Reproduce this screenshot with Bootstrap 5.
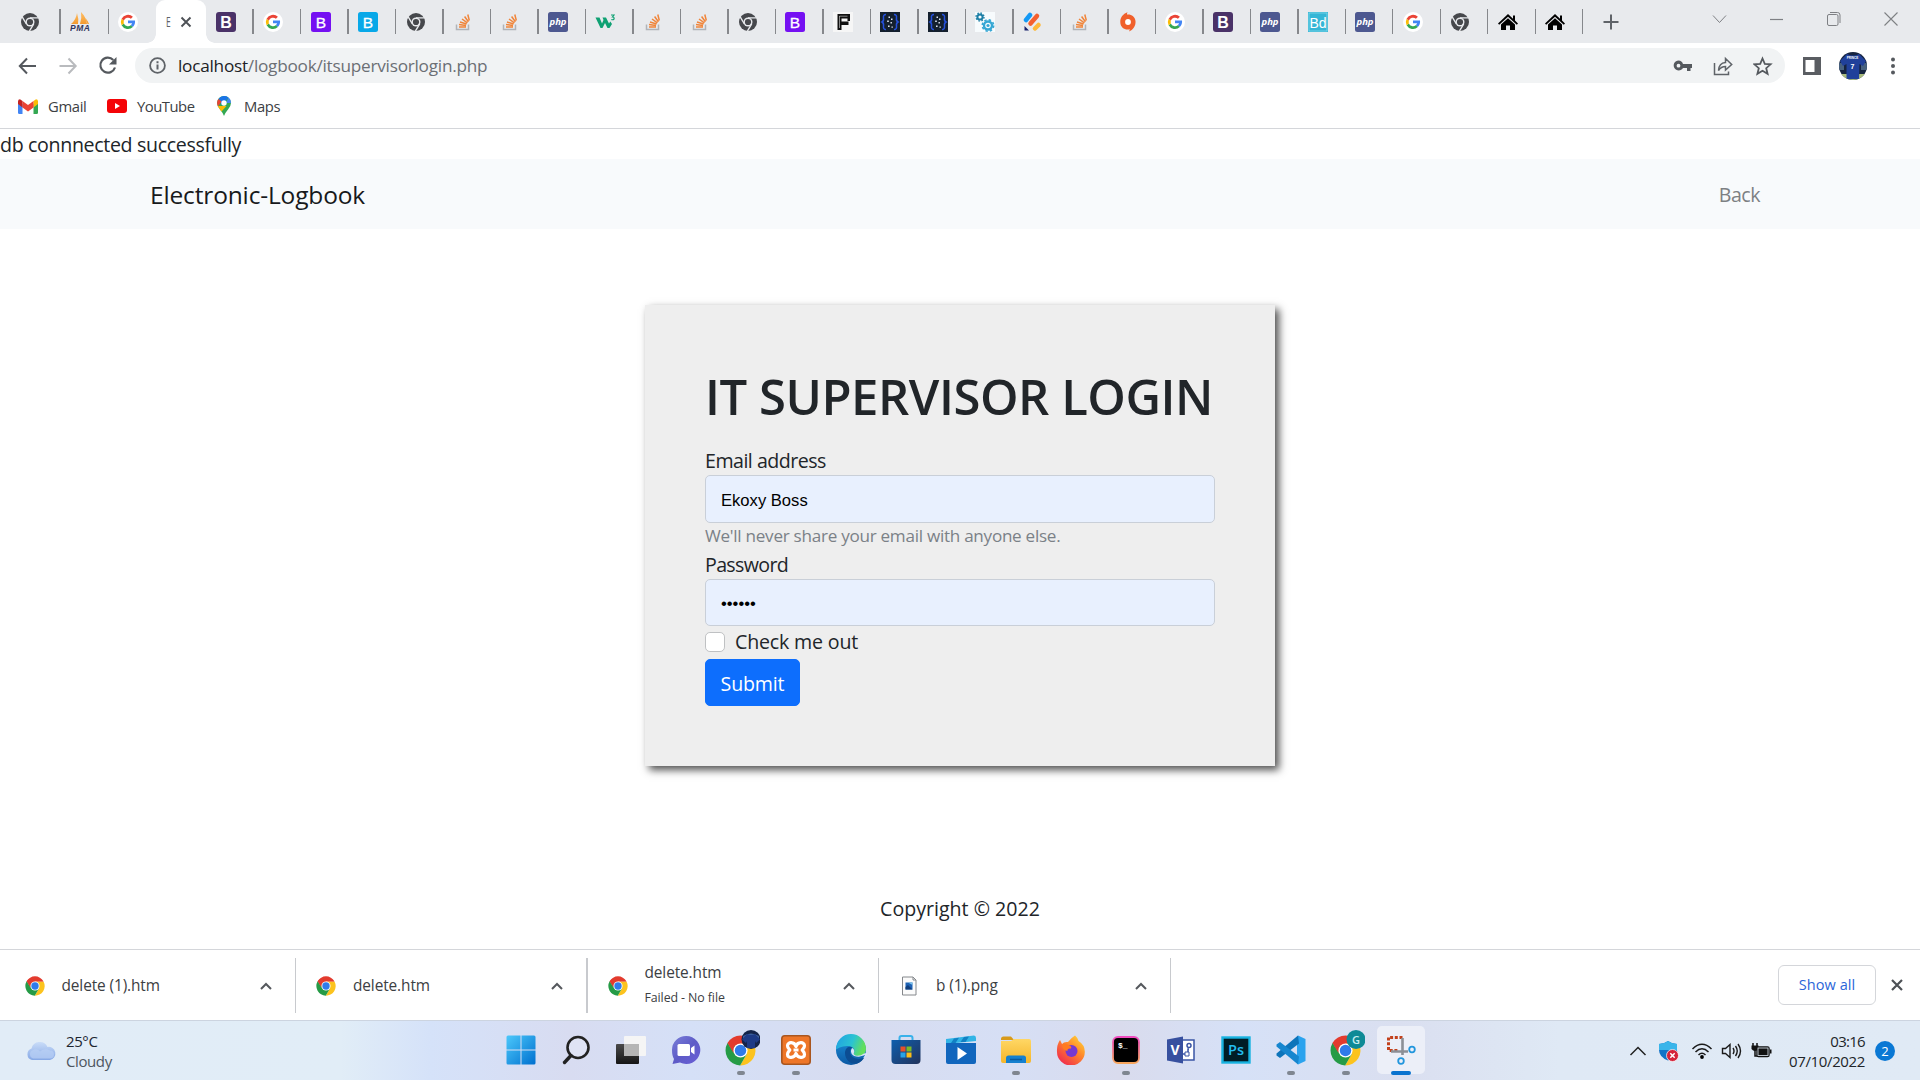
<!DOCTYPE html>
<html lang="en">
<head>
<meta charset="utf-8">
<meta name="viewport" content="width=device-width, initial-scale=1">
<title>Electronic-Logbook</title>
<link href="https://cdn.jsdelivr.net/npm/bootstrap@5.3.0/dist/css/bootstrap.min.css" rel="stylesheet">
<style>
html{font-size:20px}
body{font-family:"Open Sans","Noto Sans",sans-serif;font-size:19.6px;width:1920px;height:1080px;overflow:hidden;color:#212529;background:#fff}
svg{display:block;flex:none}
/* tab strip */
.tabstrip{height:43px;background:#e8eaed}
.tabitem{width:47.49px;padding-left:9.2px}
.tabitem::after{content:"";width:1.4px;height:25px;background:#86888c}
.tabitem.nosep::after{background:transparent}
.tab-first{width:60.5px;padding-left:20px}
.tab-second{width:48.4px}
.tab-active{width:50px;height:43px;background:#fff;border-radius:9px 9px 0 0;position:relative;padding-left:10px;gap:8px}
.tab-active::before,.tab-active::after{content:"";position:absolute;bottom:0;width:9px;height:9px}
.tab-active::before{left:-9px;background:radial-gradient(circle at 0 0,transparent 8.5px,#fff 9px)}
.tab-active::after{right:-9px;background:radial-gradient(circle at 100% 0,transparent 8.5px,#fff 9px)}
.tab-letter{width:6px;font-size:14px;color:#5f6368;line-height:20px;transform:scaleX(.6);transform-origin:0 50%}
.newtab{margin-left:20px}
.winctl{gap:36px;padding-right:18px;padding-bottom:6px}
/* toolbar */
.toolbar{height:46px;padding:0 17px 1px}
.omni{height:35px;width:1650px;background:#f1f3f4;border-radius:18px;margin-left:17px;padding:0 12px 0 14px}
.url{font-size:17.2px;letter-spacing:-.24px;line-height:24px;color:#6b6f74;margin-left:12px}
.url b{font-weight:400;color:#202124}
.bookmarks{height:40px;border-bottom:1px solid #d4d6da;padding:0 0 5px 18px;font-size:14.8px;letter-spacing:-.35px;color:#3c4043}
.bm-gmail{margin-left:10px;width:59px}
.bm-yt{margin-left:10px;width:80px;letter-spacing:-.48px}
.bm-maps{margin-left:13px}
.g15{margin-left:15px}.g17{margin-left:17px}.g18{margin-left:18px}.g19{margin-left:19px}.g20{margin-left:20px}.g22{margin-left:22px}
/* page */
.pagearea{height:820px}
.tx{display:inline-block;transform:translateY(1px)}
.dbmsg{line-height:30px;height:30px;letter-spacing:-.34px}
.topnav{height:70px;background:#f8fafc}
.topnav .container{max-width:1650px}
.topnav .navbar-brand{color:#17191b;font-size:24.5px;letter-spacing:-.15px}
.topnav .backlink{color:#7d8083;font-size:19.6px;letter-spacing:-.5px}
.loginbox{width:630px;background:#eee;padding:60px;box-shadow:4px 4px 8px #505050;margin-top:76px;line-height:30px}
.loginbox h1{font-size:49px;line-height:60px;font-weight:600;white-space:nowrap;margin-bottom:20px;letter-spacing:-.45px}
.loginbox .form-control{background:#e8f0fe;border-color:#c9cfd8;border-radius:5px;height:47.6px;font:16.6px "Liberation Sans",sans-serif;color:#000;padding-top:11px}
.lb-email{letter-spacing:-.5px}
.lb-pass{letter-spacing:-.65px}
.lb-check{letter-spacing:-.17px}
.hint{font-size:17.1px;line-height:26px;color:#7b8187;letter-spacing:-.27px}
.loginbox .form-check{margin-bottom:2.5px;padding-left:30px}
.loginbox .form-check-input{margin-left:-30px;margin-top:5.5px;width:20px;height:20px;border-color:#bfc1c3}
.loginbox .btn-primary{border-radius:5px;height:47.6px;width:95px;padding-left:0;padding-right:0;font-size:19.6px;letter-spacing:-.15px}
.copy{margin-top:127px}
/* downloads */
.dlbar{height:71px;border-top:1px solid #d4d6da;background:#fff;font-size:15.4px;letter-spacing:-.1px;color:#3c4043}
.dlitem{width:291.5px;height:55px;border-right:1px solid #c8cace;padding-left:20px;padding-right:22px;margin-top:8px}
.dl-first{width:296px;padding-left:24.5px}
.dl-thick{border-right-width:2px}
.dlitem .dltext{margin-left:17px;line-height:24px}
.dlitem .dlsub{font-size:12.4px;line-height:25px}
.dlend{height:69px;padding-right:17px}
.showall{width:98px;height:40px;border:1px solid #d4d6da;border-radius:6px;color:#2b66d9;font-size:14.5px;font-weight:500;letter-spacing:.1px}
/* taskbar */
.taskbar{height:60px;background:linear-gradient(90deg,#e1ecf7 0,#e1edf7 340px,#d5e2f9 430px,#d8dcf1 570px,#d5e0f7 690px,#d7dcf0 860px,#d6dff5 1010px,#d9dbed 1120px,#d6e1f7 1240px,#dadff0 1400px,#dfe9f5 1560px,#e0eaf5);border-top:1px solid #ccd4e0;font-size:15px;line-height:20px}
.weather{width:493px;padding-left:25px;color:#1c2530;letter-spacing:-.4px}
.wtext{margin-left:9px}
.wtext div+div{color:#4d5660}
.appslot{width:55px;height:59px;padding-top:5px;position:relative}
.appslot .tile{width:48px;height:48px;display:flex;align-items:center;justify-content:center}
.appslot.running::after{content:"";position:absolute;left:23.5px;bottom:5px;width:8px;height:4px;border-radius:2px;background:#7f8690}
.appslot.current::after{left:17.5px;width:20px;background:#0a73cf}
.appslot.current .tile{background:#eceff8;border-radius:5px}
.tray{padding-right:25px}
.clock{width:76px;margin-left:17.5px;letter-spacing:-.36px;white-space:nowrap}
.clock .hm{letter-spacing:-.7px}
.notif{width:20px;height:20px;border-radius:50%;background:#0a78d4;color:#fff;font-size:13px;margin-left:10px}
.s8{margin-left:8px}.s11{margin-left:11px}.s7{margin-left:7px}
</style>
<script src="https://cdn.jsdelivr.net/npm/bootstrap@5.3.0/dist/js/bootstrap.bundle.min.js"></script>
</head>
<body class="d-flex flex-column">

<svg width="0" height="0" class="position-absolute">
<defs>
<linearGradient id="gwin" x1="0" y1="0" x2="1" y2="1"><stop offset="0" stop-color="#4cc8fb"/><stop offset="1" stop-color="#0070cf"/></linearGradient>
<linearGradient id="gchat" x1="0" y1="0" x2="1" y2="1"><stop offset="0" stop-color="#7a7fd8"/><stop offset=".5" stop-color="#5e5bc7"/><stop offset="1" stop-color="#6a5fd6"/></linearGradient>
<linearGradient id="gedge" x1="0" y1="0" x2="1" y2=".3"><stop offset="0" stop-color="#1fa0e4"/><stop offset=".6" stop-color="#2bc3d2"/><stop offset="1" stop-color="#63df5c"/></linearGradient>
<linearGradient id="gedge2" x1="0" y1="0" x2="0" y2="1"><stop offset="0" stop-color="#1c93dd"/><stop offset="1" stop-color="#0c59a4"/></linearGradient>
<linearGradient id="gstore" x1="0" y1="0" x2="1" y2="1"><stop offset="0" stop-color="#0f5fae"/><stop offset="1" stop-color="#22335c"/></linearGradient>
<linearGradient id="gfold" x1="0" y1="0" x2="0" y2="1"><stop offset="0" stop-color="#ffd765"/><stop offset="1" stop-color="#f5b62b"/></linearGradient>
<linearGradient id="gfox" x1="1" y1="0" x2=".2" y2="1"><stop offset="0" stop-color="#ffe53b"/><stop offset=".45" stop-color="#ff8a2a"/><stop offset="1" stop-color="#f0274f"/></linearGradient>
<linearGradient id="gterm" x1="0" y1="0" x2="0" y2="1"><stop offset="0" stop-color="#f04bc0"/><stop offset="1" stop-color="#f6a55c"/></linearGradient>
<linearGradient id="gcloud" x1="0" y1="0" x2="0" y2="1"><stop offset="0" stop-color="#c9dcf8"/><stop offset="1" stop-color="#86a8e6"/></linearGradient>
<linearGradient id="gpma" x1="0" y1="0" x2="0" y2="1"><stop offset="0" stop-color="#ffc069"/><stop offset="1" stop-color="#f39a2d"/></linearGradient>
<linearGradient id="gblk" x1="0" y1="0" x2="0" y2="1"><stop offset="0" stop-color="#4a4a4a"/><stop offset="1" stop-color="#151515"/></linearGradient>

<symbol id="chromegrey" viewBox="0 0 20 20"><circle cx="10" cy="10" r="9" fill="#46484c"/><circle cx="10" cy="10" r="4.500" fill="#e8eaed"/><circle cx="10" cy="10" r="3.100" fill="#46484c"/><path d="M10 5.900H18.600M6.400 12L2.200 4.900M13.700 11.900L9.400 19.200" stroke="#e8eaed" stroke-width="1.400" fill="none"/></symbol>
<symbol id="chromecol" viewBox="0 0 32 32"><path d="M16 16L2.600 8.300A15.500 15.500 0 0 1 29.400 8.300L29.400 9H16z" fill="#e33b2e"/><path d="M16 9H29.800A15.500 15.500 0 0 1 15.600 31.500L22.500 19.500z" fill="#fcc31e"/><path d="M2.600 8.300A15.500 15.500 0 0 0 15.600 31.500L22.300 19.800 9.800 19.500z" fill="#259b46"/><path d="M2.600 8.300L9.300 19.700 14 20 10 10z" fill="#259b46"/><path d="M2.600 8.300L8.800 18.500 10 11 16 9 8 4z" fill="#e33b2e"/><circle cx="16" cy="16" r="7.300" fill="#fff"/><circle cx="16" cy="16" r="5.900" fill="#2f7bea"/></symbol>
<symbol id="google" viewBox="0 0 20 20"><circle cx="10" cy="10" r="10" fill="#fff"/><path d="M10 8.600H17Q17.500 12.500 14.900 15L12.700 13.300Q13.800 12.500 14.100 11.300H10z" fill="#4285f4"/><path d="M14.900 15A7.200 7.200 0 0 1 3.600 13.200L5.900 11.400A4.400 4.400 0 0 0 12.700 13.300z" fill="#34a853"/><path d="M3.600 13.200A7.200 7.200 0 0 1 3.600 6.800L5.900 8.600A4.400 4.400 0 0 0 5.900 11.400z" fill="#fbbc05"/><path d="M3.600 6.800A7.200 7.200 0 0 1 14.900 4.700L12.900 6.700A4.400 4.400 0 0 0 5.900 8.600z" fill="#ea4335"/></symbol>
<symbol id="pma" viewBox="0 0 20 20"><path d="M7 1Q9 7 8 12H1Q6 8 7 1zM11 0Q16 5 17 12H10Q12 6 11 0zM15.500 6Q18 9 19 12H17.500z" fill="url(#gpma)"/><text x="0" y="19" font-family="Liberation Sans" font-weight="700" font-style="italic" font-size="8.500" fill="#33375c" textLength="20">PMA</text></symbol>
<symbol id="bdark" viewBox="0 0 20 20"><rect width="20" height="20" rx="3" fill="#4a3268"/><text x="10" y="15.500" text-anchor="middle" font-family="Liberation Sans" font-weight="700" font-size="16" fill="#fff">B</text></symbol>
<symbol id="bpurple" viewBox="0 0 20 20"><rect width="20" height="20" rx="2.500" fill="#7510f2"/><text x="10" y="15.500" text-anchor="middle" font-family="Liberation Sans" font-size="15.500" fill="#fff" stroke="#fff" stroke-width=".3">B</text></symbol>
<symbol id="bcyan" viewBox="0 0 20 20"><rect width="20" height="20" rx="2.500" fill="#08a8e8"/><text x="10" y="15.500" text-anchor="middle" font-family="Liberation Sans" font-size="15.500" fill="#fff" stroke="#fff" stroke-width=".3">B</text></symbol>
<symbol id="stack" viewBox="0 0 20 20"><path d="M3.500 12.500V17.500H15.500V12.500" fill="none" stroke="#b0b3b8" stroke-width="1.500"/><path d="M6 15H13M6 12.600L13 13.500M7 10L13.600 12M9 7L14.400 10.800M11.600 4.500L15.400 9.700M14.800 2.500L16.300 8.500" stroke="#f0853a" stroke-width="1.500"/></symbol>
<symbol id="phpi" viewBox="0 0 20 20"><rect width="20" height="20" rx="2.500" fill="#4d5890"/><text x="1.500" y="12.800" font-family="Open Sans" font-weight="700" font-style="italic" font-size="9.500" fill="#fff" textLength="17">php</text></symbol>
<symbol id="w3" viewBox="0 0 20 20"><path d="M.500 5.500H4.500L7 11.500 8.500 8 7.500 5.500H11L14 11.500 15.300 9.500 17 12 14.500 16H12.500L10 11 7.500 16H5.500z" fill="#0fa173"/><path d="M16 3H19L17.500 5Q19.500 5 19 7Q18 8.200 16.300 7.500" fill="none" stroke="#0fa173" stroke-width="1.200"/></symbol>
<symbol id="fmark" viewBox="0 0 20 20"><rect width="20" height="20" fill="#f6f6f6"/><path d="M4.500 2H17V9H14.500V6.500H8.500V9.500H15.500V13H8.500V18H4.500z" fill="#111"/><path d="M6.500 4.200H14.500M6.500 4V16" stroke="#fff" stroke-width=".5"/></symbol>
<symbol id="braces" viewBox="0 0 20 20"><rect width="20" height="20" fill="#14202e"/><path d="M6 2.500Q3 2.500 3.500 6Q4 9 2 10Q4 11 3.500 14Q3 17.500 6 17.500M14 2.500Q17 2.500 16.500 6Q16 9 18 10Q16 11 16.500 14Q17 17.500 14 17.500" fill="none" stroke="#2450dc" stroke-width="1.500"/><path d="M8.500 4.500h1.500v1.500H8.500zM11 6.500h1.500v1.500h-1.500zM7.200 8.500h1.600v1.600H7.200zM10.500 10h1.400v1.400h-1.400zM8 13.500h1.600v1.600H8zM11.500 14.500h1.300v1.300h-1.300z" fill="#dfe6f5"/></symbol>
<symbol id="gears" viewBox="0 0 20 20"><rect width="20" height="20" fill="#f7fbfd"/><circle cx="5" cy="5" r="2.600" fill="none" stroke="#1d7fa6" stroke-width="2"/><circle cx="5" cy="5" r="4" fill="none" stroke="#1d7fa6" stroke-width="1.400" stroke-dasharray="1.500 1.640"/><circle cx="13" cy="13.500" r="4" fill="none" stroke="#36a7d4" stroke-width="2.400"/><circle cx="13" cy="13.500" r="5.700" fill="none" stroke="#36a7d4" stroke-width="1.600" stroke-dasharray="2.400 2.080"/><circle cx="13" cy="13.500" r="1.600" fill="#36a7d4"/></symbol>
<symbol id="diag" viewBox="0 0 20 20"><g stroke-linecap="round" stroke-width="4.500"><path d="M3 8L7 3" stroke="#1499f5"/><path d="M7.500 11.500L14 4" stroke="#f4602f"/><path d="M12 16.500L15.500 13" stroke="#fdb93a"/></g><path d="M1.500 14L6 18.500H1.500z" fill="#17206b"/></symbol>
<symbol id="origin" viewBox="0 0 20 20"><path d="M10 2.500C14 2.500 17 5 17.500 9C18 14 15 18 11 19.500C11.500 18.500 11.800 18 11.800 17.300C7 18.500 2.500 15.500 2.300 10.500C2 5.500 5 2 9.500 .300C9 1.200 9 1.800 9 2.500z" fill="#f0602b"/><circle cx="10" cy="10" r="2.900" fill="#fff"/></symbol>
<symbol id="bdi" viewBox="0 0 20 20"><rect width="20" height="20" fill="#35b6d6"/><rect x="1" y="1" width="18" height="18" fill="none" stroke="#8fdcec" stroke-width=".7"/><text x="1.500" y="15.500" font-family="Liberation Sans" font-size="14" fill="#fff" textLength="17">Bd</text></symbol>
<symbol id="house" viewBox="0 0 20 20"><path d="M10 2L15 6.800V3.500H17V8.600L20 11.500 18.800 12.700 10 4.800 1.200 12.700 0 11.500z" fill="#000"/><path d="M10 6.300L17 12.500V18H12V13.500H8V18H3V12.500z" fill="#000"/></symbol>
<symbol id="chevup" viewBox="0 0 14 14"><path d="M2 10L7 5 12 10" fill="none" stroke="#55585d" stroke-width="2"/></symbol>
</defs>
</svg>

<!-- tabs -->
<header class="tabstrip d-flex align-items-center">
 <div class="tabitem tab-first d-flex align-items-center justify-content-between"><svg width="20" height="20"><use href="#chromegrey"/></svg></div>
 <div class="tabitem tab-second d-flex align-items-center justify-content-between"><svg width="20" height="20"><use href="#pma"/></svg></div>
 <div class="tabitem nosep d-flex align-items-center justify-content-between"><svg width="20" height="20"><use href="#google"/></svg></div>
 <div class="tab-active d-flex align-items-center"><span class="tab-letter">E</span><svg width="12" height="12" viewBox="0 0 12 12"><path d="M1.500 1.500L10.500 10.500M10.500 1.500L1.500 10.500" stroke="#4d5156" stroke-width="1.900"/></svg></div>
 <div class="tabitem d-flex align-items-center justify-content-between"><svg width="20" height="20"><use href="#bdark"/></svg></div>
 <div class="tabitem d-flex align-items-center justify-content-between"><svg width="20" height="20"><use href="#google"/></svg></div>
 <div class="tabitem d-flex align-items-center justify-content-between"><svg width="20" height="20"><use href="#bpurple"/></svg></div>
 <div class="tabitem d-flex align-items-center justify-content-between"><svg width="20" height="20"><use href="#bcyan"/></svg></div>
 <div class="tabitem d-flex align-items-center justify-content-between"><svg width="20" height="20"><use href="#chromegrey"/></svg></div>
 <div class="tabitem d-flex align-items-center justify-content-between"><svg width="20" height="20"><use href="#stack"/></svg></div>
 <div class="tabitem d-flex align-items-center justify-content-between"><svg width="20" height="20"><use href="#stack"/></svg></div>
 <div class="tabitem d-flex align-items-center justify-content-between"><svg width="20" height="20"><use href="#phpi"/></svg></div>
 <div class="tabitem d-flex align-items-center justify-content-between"><svg width="20" height="20"><use href="#w3"/></svg></div>
 <div class="tabitem d-flex align-items-center justify-content-between"><svg width="20" height="20"><use href="#stack"/></svg></div>
 <div class="tabitem d-flex align-items-center justify-content-between"><svg width="20" height="20"><use href="#stack"/></svg></div>
 <div class="tabitem d-flex align-items-center justify-content-between"><svg width="20" height="20"><use href="#chromegrey"/></svg></div>
 <div class="tabitem d-flex align-items-center justify-content-between"><svg width="20" height="20"><use href="#bpurple"/></svg></div>
 <div class="tabitem d-flex align-items-center justify-content-between"><svg width="20" height="20"><use href="#fmark"/></svg></div>
 <div class="tabitem d-flex align-items-center justify-content-between"><svg width="20" height="20"><use href="#braces"/></svg></div>
 <div class="tabitem d-flex align-items-center justify-content-between"><svg width="20" height="20"><use href="#braces"/></svg></div>
 <div class="tabitem d-flex align-items-center justify-content-between"><svg width="20" height="20"><use href="#gears"/></svg></div>
 <div class="tabitem d-flex align-items-center justify-content-between"><svg width="20" height="20"><use href="#diag"/></svg></div>
 <div class="tabitem d-flex align-items-center justify-content-between"><svg width="20" height="20"><use href="#stack"/></svg></div>
 <div class="tabitem d-flex align-items-center justify-content-between"><svg width="20" height="20"><use href="#origin"/></svg></div>
 <div class="tabitem d-flex align-items-center justify-content-between"><svg width="20" height="20"><use href="#google"/></svg></div>
 <div class="tabitem d-flex align-items-center justify-content-between"><svg width="20" height="20"><use href="#bdark"/></svg></div>
 <div class="tabitem d-flex align-items-center justify-content-between"><svg width="20" height="20"><use href="#phpi"/></svg></div>
 <div class="tabitem d-flex align-items-center justify-content-between"><svg width="20" height="20"><use href="#bdi"/></svg></div>
 <div class="tabitem d-flex align-items-center justify-content-between"><svg width="20" height="20"><use href="#phpi"/></svg></div>
 <div class="tabitem d-flex align-items-center justify-content-between"><svg width="20" height="20"><use href="#google"/></svg></div>
 <div class="tabitem d-flex align-items-center justify-content-between"><svg width="20" height="20"><use href="#chromegrey"/></svg></div>
 <div class="tabitem d-flex align-items-center justify-content-between"><svg width="20" height="20"><use href="#house"/></svg></div>
 <div class="tabitem d-flex align-items-center justify-content-between"><svg width="20" height="20"><use href="#house"/></svg></div>
 <svg class="newtab" width="16" height="16" viewBox="0 0 16 16"><path d="M8 .500V15.500M.500 8H15.500" stroke="#5f6368" stroke-width="2"/></svg>
 <div class="winctl d-flex align-items-center ms-auto">
  <svg width="22" height="22" viewBox="0 0 22 22"><path d="M3 7.500L9.500 14.500 16 7.500" fill="none" stroke="#7e8084"/></svg>
  <svg width="20" height="20" viewBox="0 0 20 20"><path d="M2 10.500H15" stroke="#7e8084" stroke-width="1.200"/></svg>
  <svg width="20" height="20" viewBox="0 0 20 20"><rect x="3.500" y="5.500" width="10.500" height="11" rx="1.500" fill="none" stroke="#7e8084"/><path d="M6 3.500H13.500Q16 3.500 16 6V14" fill="none" stroke="#7e8084"/></svg>
  <svg width="22" height="22" viewBox="0 0 22 22"><path d="M4.500 4.500L17.500 17.500M17.500 4.500L4.500 17.500" stroke="#7e8084" stroke-width="1.100"/></svg>
 </div>
</header>

<!-- toolbar -->
<div class="toolbar d-flex align-items-center">
 <svg width="21" height="20" viewBox="0 0 21 20"><path d="M19 10H3M10 2.500L2.800 10 10 17.500" fill="none" stroke="#55595e" stroke-width="2"/></svg>
 <svg class="g20" width="21" height="20" viewBox="0 0 21 20"><path d="M1.500 10H17.500M10.500 2.500L17.700 10 10.500 17.500" fill="none" stroke="#b9bbbe" stroke-width="2"/></svg>
 <svg class="g18" width="21" height="21" viewBox="0 0 21 21"><path d="M16.300 5A7.500 7.500 0 1 0 18 12.500" fill="none" stroke="#55595e" stroke-width="2.200"/><path d="M19.500 2V9.500H12z" fill="#55595e"/></svg>
 <div class="omni d-flex align-items-center">
  <svg width="17" height="17" viewBox="0 0 17 17"><circle cx="8.500" cy="8.500" r="7.400" fill="none" stroke="#5f6368" stroke-width="1.800"/><path d="M8.500 7.500V12.500M8.500 4.300V6.200" stroke="#5f6368" stroke-width="2"/></svg>
  <span class="url"><b>localhost</b>/logbook/itsupervisorlogin.php</span>
  <svg class="ms-auto" width="20" height="20" viewBox="0 0 20 20"><path fill-rule="evenodd" d="M5.500 4.500A5 5 0 0 1 10 8H19V12H17.500V15H14V12H10A5 5 0 1 1 5.500 4.500zM5.500 7.800A1.900 1.900 0 1 0 5.500 11.600 1.900 1.900 0 0 0 5.500 7.800z" fill="#55595e"/></svg>
  <svg class="g20" width="20" height="20" viewBox="0 0 20 20"><path d="M1.500 7V18.500H15.500V15.500" fill="none" stroke="#5f6368" stroke-width="1.500"/><path d="M5.500 14.500Q6 7 12.500 6.500V2.500L18.700 8.500 12.500 14V10.500Q8 10.500 5.500 14.500z" fill="none" stroke="#5f6368" stroke-width="1.500"/></svg>
  <svg class="g20" width="20" height="20" viewBox="0 0 20 20"><path d="M9.500 2.500L11.800 7.800 17.600 8.300 13.200 12.200 14.600 17.800 9.500 14.800 4.400 17.800 5.800 12.200 1.400 8.300 7.200 7.800z" fill="none" stroke="#55595e" stroke-width="1.800"/></svg>
 </div>
 <svg class="g18" width="18" height="18" viewBox="0 0 18 18"><path fill-rule="evenodd" d="M0 0H18V18H0zM2.500 3V15H11.500V3z" fill="#5a5d62"/></svg>
 <svg class="g18" width="28" height="28" viewBox="0 0 28 28"><defs><clipPath id="av"><circle cx="14" cy="14" r="14"/></clipPath></defs><g clip-path="url(#av)"><rect width="28" height="28" fill="#15233f"/><path d="M0 11H5V18H0zM22 11H28V18H22z" fill="#47617f"/><path d="M0 22H28V28H0z" fill="#a9bb7c"/><path d="M8 2Q14 5 20 2L27 9 24 14 20.500 12 20 27H7.500L7.500 12 4 14 1 9z" fill="#20409a"/><text x="13.500" y="7" text-anchor="middle" font-size="3" font-weight="700" font-family="Liberation Sans" fill="#fff">PRINCE</text><text x="13.500" y="17" text-anchor="middle" font-size="7" font-weight="700" font-family="Liberation Sans" fill="#fff">7</text></g></svg>
 <svg class="g22" width="8" height="18" viewBox="0 0 8 18"><g fill="#55595e"><circle cx="4" cy="2.500" r="2"/><circle cx="4" cy="9" r="2"/><circle cx="4" cy="15.500" r="2"/></g></svg>
</div>

<div class="bookmarks d-flex align-items-center">
 <svg width="20" height="15" viewBox="0 0 20 15"><path d="M0 2L4.500 5V15H1.300Q0 15 0 13.500z" fill="#4285f4"/><path d="M20 2L15.500 5V15H18.700Q20 15 20 13.500z" fill="#34a853"/><path d="M15.500 2L18 .200Q20 .200 20 2.500V5L15.500 8.500z" fill="#fbbc04"/><path d="M4.500 2L10 6 15.500 2V8.500L10 12.500 4.500 8.500z" fill="#ea4335"/><path d="M0 2.500Q0 .200 2 .200L4.500 2V8.500L0 5z" fill="#c5221f"/></svg>
 <span class="bm-gmail">Gmail</span>
 <svg width="20" height="14" viewBox="0 0 20 14"><rect width="20" height="14" rx="3" fill="#f40407"/><path d="M8 4L13 7 8 10z" fill="#fff"/></svg>
 <span class="bm-yt">YouTube</span>
 <svg width="14" height="20" viewBox="0 0 14 20"><path d="M7 0A7 7 0 0 1 14 7Q14 10 11 13.500 8 17 7 20 6 17 3 13.500 0 10 0 7A7 7 0 0 1 7 0z" fill="#34a853"/><path d="M1.500 3A7 7 0 0 1 11.500 1.500L5 9.500z" fill="#1a73e8"/><path d="M1.500 3L4.500 5.500 1 10.500Q-1 6 1.500 3z" fill="#ea4335"/><path d="M.800 10L9.500 10 4.500 15.500Q1.500 12 .800 10z" fill="#fbbc04"/><path d="M11.500 1.500Q14 3.500 14 7L9 7z" fill="#4285f4"/><circle cx="7" cy="7" r="2.700" fill="#fff"/></svg>
 <span class="bm-maps">Maps</span>
</div>

<!-- web page -->
<main class="pagearea overflow-hidden">
 <div class="dbmsg"><span class="tx">db connnected successfully</span></div>
 <nav class="navbar navbar-expand-lg topnav">
  <div class="container">
   <a class="navbar-brand" href="#"><span class="tx">Electronic-Logbook</span></a>
   <div class="navbar-nav"><a class="nav-link backlink" href="#"><span class="tx">Back</span></a></div>
  </div>
 </nav>
 <div class="d-flex flex-column align-items-center">
  <form class="loginbox">
   <h1><span class="tx">IT SUPERVISOR LOGIN</span></h1>
   <div class="lb-email"><span class="tx">Email address</span></div>
   <input type="text" class="form-control" value="Ekoxy Boss">
   <div class="hint">We'll never share your email with anyone else.</div>
   <div class="lb-pass"><span class="tx">Password</span></div>
   <input type="password" class="form-control" value="secret">
   <div class="form-check"><input class="form-check-input" type="checkbox"><span class="tx lb-check">Check me out</span></div>
   <button type="button" class="btn btn-primary"><span class="tx">Submit</span></button>
  </form>
  <div class="copy"><span class="tx">Copyright © 2022</span></div>
 </div>
</main>

<!-- downloads -->
<section class="dlbar d-flex align-items-start">
 <div class="dlitem dl-first d-flex align-items-center"><svg width="20" height="20"><use href="#chromecol"/></svg><span class="dltext">delete (1).htm</span><svg class="ms-auto" width="14" height="14"><use href="#chevup"/></svg></div>
 <div class="dlitem dl-thick d-flex align-items-center"><svg width="20" height="20"><use href="#chromecol"/></svg><span class="dltext">delete.htm</span><svg class="ms-auto" width="14" height="14"><use href="#chevup"/></svg></div>
 <div class="dlitem d-flex align-items-center"><svg width="20" height="20"><use href="#chromecol"/></svg><span class="dltext d-flex flex-column"><span>delete.htm</span><span class="dlsub">Failed - No file</span></span><svg class="ms-auto" width="14" height="14"><use href="#chevup"/></svg></div>
 <div class="dlitem d-flex align-items-center"><svg width="20" height="20" viewBox="0 0 20 20"><path d="M3.500 1H14L17 4V19H3.500z" fill="#fbfbfb" stroke="#85888c"/><path d="M14 1V4H17" fill="none" stroke="#85888c"/><rect x="6.500" y="6.500" width="7" height="7" fill="#1e62b4"/><path d="M6.500 11L9 9 13.500 13.500H6.500z" fill="#123e7c"/><path d="M9 6.500H13.500V9z" fill="#7cc3ee"/></svg><span class="dltext">b (1).png</span><svg class="ms-auto" width="14" height="14"><use href="#chevup"/></svg></div>
 <div class="dlend d-flex align-items-center ms-auto">
  <div class="showall d-flex align-items-center justify-content-center">Show all</div>
  <svg class="g15" width="12" height="12" viewBox="0 0 12 12"><path d="M1 1L11 11M11 1L1 11" stroke="#4d5156" stroke-width="2.200"/></svg>
 </div>
</section>

<!-- taskbar -->
<footer class="taskbar d-flex align-items-center">
 <div class="weather d-flex align-items-center">
  <svg width="32" height="22" viewBox="0 0 32 22"><path d="M7 20A6 6 0 0 1 6.500 8.500 8.500 8.500 0 0 1 22.500 7 6.500 6.500 0 0 1 25 20z" fill="url(#gcloud)"/><path d="M8 18.500A4.500 4.500 0 0 1 8 10Q12 8 15 11.500 20 7.500 25 10.500A4 4 0 0 1 25 18.500z" fill="#b9d0f5" opacity=".7"/></svg>
  <div class="wtext"><div>25°C</div><div>Cloudy</div></div>
 </div>
 <div class="d-flex">
  <div class="appslot"><div class="tile mx-auto"><svg width="30" height="30" viewBox="0 0 30 30"><path d="M.500 2Q.500.500 2 .500H14.500V14.500H.500zM15.500.500H28Q29.500.500 29.500 2V14.500H15.500zM.500 15.500H14.500V29.500H2Q.500 29.500.500 28zM15.500 15.500H29.500V28Q29.500 29.500 28 29.500H15.500z" fill="url(#gwin)"/></svg></div></div>
  <div class="appslot"><div class="tile mx-auto"><svg width="28" height="30" viewBox="0 0 28 30"><circle cx="16" cy="12.500" r="10.500" fill="#dfe3f5" stroke="#222" stroke-width="2.600"/><path d="M9 20.500L2.500 27.500" stroke="#222" stroke-width="3.400" stroke-linecap="round"/></svg></div></div>
  <div class="appslot"><div class="tile mx-auto"><svg width="30" height="30" viewBox="0 0 30 30"><rect y="9" width="23" height="20" rx="1" fill="url(#gblk)"/><rect x="8" y="1" width="22" height="20" rx="1" fill="#f5f5f5"/><rect x="8" y="9" width="15" height="12" fill="#b5b5b5"/></svg></div></div>
  <div class="appslot"><div class="tile mx-auto"><svg width="30" height="30" viewBox="0 0 30 30"><path d="M15 1A14 14 0 1 1 9 27.500L1.500 29 3 24Q1 21 1 15A14 14 0 0 1 15 1z" fill="url(#gchat)"/><rect x="6.500" y="9" width="12.500" height="12" rx="1.500" fill="#fff"/><path d="M20 13L23.500 10.500V19.500L20 17z" fill="#fff"/></svg></div></div>
  <div class="appslot running"><div class="tile mx-auto"><svg width="38" height="40" viewBox="0 0 38 40"><svg x="3" y="5" width="31" height="31"><use href="#chromecol"/></svg><circle cx="29" cy="9.500" r="9.500" fill="#14244a"/><path d="M21 6Q29 1 37 6V9H21z" fill="#3c5f9c"/><path d="M20 9.500L25 4Q29 6 33 4L38 9.500 34 13 33 11V18H25V11L24 13z" fill="#1d3a86"/></svg></div></div>
  <div class="appslot running"><div class="tile mx-auto"><svg width="30" height="30" viewBox="0 0 30 30"><rect x=".800" y=".800" width="28.400" height="28.400" rx="3" fill="#ee7628" stroke="#a9561f" stroke-width="1.600"/><path d="M15 11.500C13.500 6.500 6.500 6.500 6.500 10.800 6.500 13 8.300 14 8.800 15 8.300 16 6.500 17 6.500 19.500 6.500 23.500 13.500 23.500 15 18.500 16.500 23.500 23.500 23.500 23.500 19.500 23.500 17 21.700 16 21.200 15 21.700 14 23.500 13 23.500 10.800 23.500 6.500 16.500 6.500 15 11.500zM12.500 15H17.500" fill="none" stroke="#fff" stroke-width="3.200" stroke-linejoin="round"/></svg></div></div>
  <div class="appslot"><div class="tile mx-auto"><svg width="32" height="32" viewBox="0 0 32 32"><circle cx="16" cy="16" r="15" fill="url(#gedge2)"/><path d="M1 15A15 15 0 0 1 31 15C31 20 27 22 23 22 19 22 17.500 20.500 19 18.500 20.500 16 18 12 13.500 12 6 11.500 1 16 1 15z" fill="url(#gedge)"/><path d="M10 19C10 26 16 31 22 29.500 26 28.500 28.500 25 29 23.500 24 26.500 17 24.500 15.500 20 14.500 17 16 14 17.500 13.500 13 11 10 15 10 19z" fill="#0c4d93"/><path d="M17.500 14Q15 16 16.500 19.500 18.500 23 24 22.800L30.500 21 28 24Q32 23 32 19L29 19.500Q25 22.500 20.500 21.500 18 20.500 19 18.500 20 16 17.500 14z" fill="#dce4f6"/></svg></div></div>
  <div class="appslot"><div class="tile mx-auto"><svg width="30" height="32" viewBox="0 0 30 32"><path d="M8.500 7V4Q8.500 2 10.500 2H19.500Q21.500 2 21.500 4V7" fill="none" stroke="#39b1ea" stroke-width="2"/><path d="M.500 6H29.500V26Q29.500 30 25.500 30H4.500Q.500 30 .500 26z" fill="url(#gstore)"/><path d="M9.500 12.500h5v5h-5z" fill="#e8502a"/><path d="M15.500 12.500h5v5h-5z" fill="#7cb928"/><path d="M9.500 18.500h5v5h-5z" fill="#27a2e6"/><path d="M15.500 18.500h5v5h-5z" fill="#fdbd17"/></svg></div></div>
  <div class="appslot"><div class="tile mx-auto"><svg width="30" height="30" viewBox="0 0 30 30"><path d="M0 4L28 .500Q30 .500 30 3V6L0 9z" fill="#31b4e6"/><path d="M8 3.500L13 2.800 9.500 8H5zM18 2L23 1.400 19.500 7H14.500z" fill="#1180c4"/><path d="M0 8H30V27Q30 29 28 29H2Q0 29 0 27z" fill="#1166bd"/><path d="M11.500 12L21 18.500 11.500 25z" fill="#fff"/></svg></div></div>
  <div class="appslot running"><div class="tile mx-auto"><svg width="30" height="28" viewBox="0 0 30 28"><path d="M0 3Q0 .500 2.500.500H10L13 4H0z" fill="#d89a1a"/><path d="M0 5H10L13 3H28Q30 3 30 5V25Q30 27 28 27H2Q0 27 0 25z" fill="url(#gfold)"/><path d="M5 27V22Q5 19.500 7.500 19.500H22.500Q25 19.500 25 22V27z" fill="#1580cf"/><path d="M9 23.500H21" stroke="#0a5a9e" stroke-width="1.500"/></svg></div></div>
  <div class="appslot"><div class="tile mx-auto"><svg width="30" height="30" viewBox="0 0 30 30"><path d="M19 .500Q22 3 22.500 6 29 10 28.800 17A13.900 13.500 0 0 1 1 17Q.500 10 4 5L6 9Q8 6.500 12 7 15 3 19 .500z" fill="url(#gfox)"/><circle cx="15.500" cy="16" r="6" fill="#7539d1"/><path d="M6 9.500Q10 7.500 13 10.500 16 11 15 13.500 11 13 11.500 16 6 15 6 9.500z" fill="#ff7a20"/></svg></div></div>
  <div class="appslot running"><div class="tile mx-auto"><svg width="28" height="28" viewBox="0 0 28 28"><rect x="1" y="1" width="26" height="26" rx="5" fill="#000" stroke="url(#gterm)" stroke-width="1.800"/><text x="6" y="12" font-family="Liberation Mono" font-size="8" font-weight="700" fill="#fff">$_</text></svg></div></div>
  <div class="appslot"><div class="tile mx-auto"><svg width="28" height="28" viewBox="0 0 28 28"><rect x="12" y="4" width="15" height="20" fill="#fff" stroke="#3a55a5" stroke-width="1.500"/><path d="M16 18H21V13H22" fill="none" stroke="#3a55a5" stroke-width="1.500"/><circle cx="22" cy="9.500" r="2" fill="none" stroke="#3a55a5" stroke-width="1.500"/><path d="M18 16h4v4h-4z" fill="#fff" stroke="#3a55a5"/><path d="M0 3.500L16 .500V27.500L0 24.500z" fill="#37509f"/><text x="8" y="19" text-anchor="middle" font-size="14" font-weight="700" font-family="Open Sans" fill="#fff">V</text></svg></div></div>
  <div class="appslot"><div class="tile mx-auto"><svg width="30" height="28" viewBox="0 0 30 28"><rect x="1.500" y="1.500" width="27" height="25" fill="#001d26" stroke="#18b3e0" stroke-width="2.400"/><text x="15" y="18.500" text-anchor="middle" font-size="14.500" font-weight="600" font-family="Open Sans" fill="#23bdf0">Ps</text></svg></div></div>
  <div class="appslot running"><div class="tile mx-auto"><svg width="30" height="30" viewBox="0 0 30 30"><path d="M22 .500L29.500 4V26L22 29.500 21 22V8z" fill="#2ba3ee"/><path d="M22 .500L23 8.500 4 23 .500 20.500V18.500z" fill="#0d74ba"/><path d="M.500 11.500V9.500L4 7 23 21.500 22 29.500z" fill="#1686cf"/></svg></div></div>
  <div class="appslot running"><div class="tile mx-auto"><svg width="38" height="40" viewBox="0 0 38 40"><svg x="3" y="5" width="31" height="31"><use href="#chromecol"/></svg><circle cx="29" cy="9.500" r="9.500" fill="#0e8a96"/><text x="29" y="13.500" text-anchor="middle" font-size="11" font-weight="600" font-family="Open Sans" fill="#c9eef0">G</text></svg></div></div>
  <div class="appslot running current"><div class="tile mx-auto"><svg width="30" height="30" viewBox="0 0 30 30"><path d="M15 4V2.500H2.500V15.500H12" fill="none" stroke="#c2411c" stroke-width="3" stroke-dasharray="3 1.700"/><path d="M16.500 3V20M5 16.500H22" stroke="#8b8f96" stroke-width="2.600"/><circle cx="26" cy="14.500" r="2.800" fill="none" stroke="#2296dd" stroke-width="1.800"/><circle cx="15" cy="26" r="2.800" fill="none" stroke="#2296dd" stroke-width="1.800"/></svg></div></div>
 </div>
 <div class="tray d-flex align-items-center ms-auto">
  <svg width="18" height="18" viewBox="0 0 18 18"><path d="M1.500 13L9 5.500 16.500 13" fill="none" stroke="#222" stroke-width="1.500"/></svg>
  <svg class="s11" width="22" height="22" viewBox="0 0 22 22"><path d="M10 1Q14 4 19 4V10Q19 17 10 20.500 1 17 1 10V4Q6 4 10 1z" fill="#1273c7"/><path d="M10 1Q14 4 19 4V10H1V4Q6 4 10 1z" fill="#39b5ea"/><circle cx="14.500" cy="15.500" r="6" fill="#d5233a" stroke="#fff" stroke-width=".700"/><path d="M12.300 13.300L16.700 17.700M16.700 13.300L12.300 17.700" stroke="#fff" stroke-width="1.500"/></svg>
  <svg class="s11" width="22" height="18" viewBox="0 0 22 18"><g fill="none" stroke="#1a1a1a" stroke-width="1.500"><path d="M1.500 7Q11-2.500 20.500 7M4.500 10Q11 3.500 17.500 10M7.500 13Q11 9.500 14.500 13"/></g><circle cx="11" cy="15" r="1.900"/></svg>
  <svg class="s8" width="22" height="18" viewBox="0 0 22 18"><g fill="none" stroke="#1a1a1a" stroke-width="1.400"><path d="M1.500 6.500H4.500L9 2.500V15.500L4.500 11.500H1.500z"/><path d="M12 6Q14 9 12 12M14.500 4Q18 9 14.500 14M17 2Q22 9 17 16"/></g></svg>
  <svg class="s7" width="22" height="18" viewBox="0 0 22 18"><path d="M3 1V4M7 1V4M5 8V14H8" stroke="#111" stroke-width="1.500" fill="none"/><path d="M1.500 3.500H8.500V7Q7 9 5 9T1.500 7z" fill="#111"/><rect x="7" y="5" width="12" height="9.500" rx="1.500" fill="#111" stroke="#111" stroke-width="1.500"/><rect x="8" y="6" width="10" height="7.500" fill="none" stroke="#e0eaf5" stroke-width=".800"/><path d="M20 7.500h1.500v4H20z" fill="#111"/></svg>
  <div class="clock text-end"><div class="hm">03:16</div><div>07/10/2022</div></div>
  <div class="notif d-flex align-items-center justify-content-center">2</div>
 </div>
</footer>
</body>
</html>
